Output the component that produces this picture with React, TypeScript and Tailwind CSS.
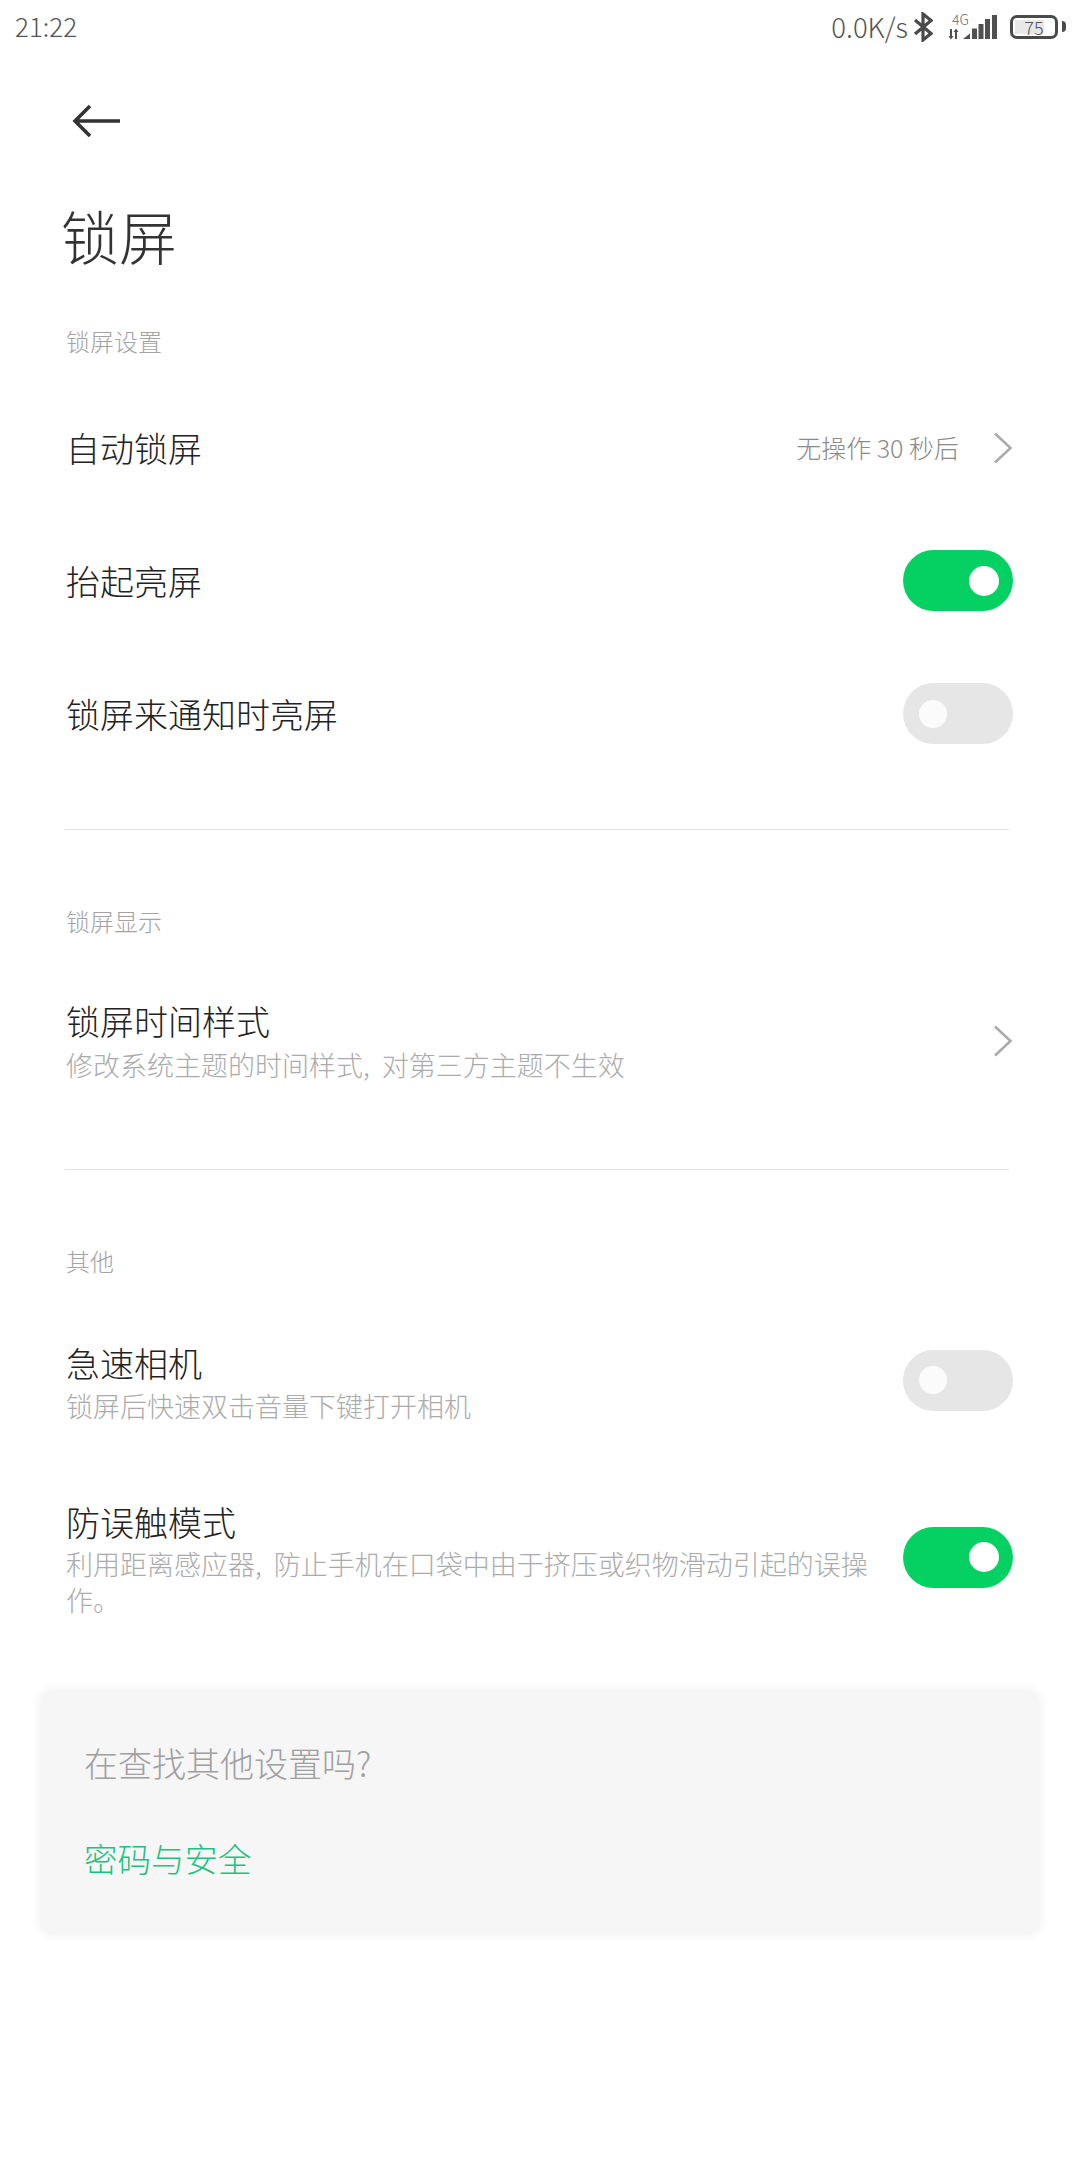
const font = "font-['Noto_Sans_CJK_SC','Noto_Sans',sans-serif]";

function SectionLabel({ children, className = "" }: { children: string; className?: string }) {
  return <div className={`flex h-10 items-center pb-[1px] pl-[66px] text-[24px] font-light text-[#a3a3a3] ${className}`}>{children}</div>;
}

function Toggle({ on, className = "" }: { on: boolean; className?: string }) {
  return (
    <div className={`flex h-[61px] w-[110px] shrink-0 items-center rounded-full ${on ? "justify-end bg-[#05d163] pr-[14px]" : "justify-start bg-[#e6e6e6] pl-[16px]"} ${className}`}>
      <div className={`rounded-full ${on ? "h-[30px] w-[30px] bg-white" : "h-7 w-7 bg-[#fbfbfb]"}`} />
    </div>
  );
}

function Chevron() {
  return (
    <svg width="20" height="32" viewBox="0 0 20 32" fill="none" className="shrink-0">
      <path d="M2 1.5 L17.5 16 L2 30.5" stroke="#ababab" strokeWidth="2.6" />
    </svg>
  );
}

function Divider({ className = "" }: { className?: string }) {
  return <div className={`ml-[65px] h-px w-[944px] bg-[#e2e2e2] ${className}`} />;
}

function BluetoothIcon() {
  return (
    <svg width="20" height="30" viewBox="0 0 20 30" fill="none" className="shrink-0">
      <path d="M2 8 L18 21.5 L10 28 V2 L18 8.5 L2 22" stroke="#4a4a4a" strokeWidth="3.2" />
    </svg>
  );
}

function SignalIcon() {
  return (
    <div className="relative h-[28px] w-[50px]">
      <span className="absolute left-[4px] top-[-2px] text-[14px] leading-[16px] font-light text-[#666]">4G</span>
      <svg width="50" height="28" viewBox="0 0 50 28" className="absolute left-0 top-0" fill="#505050">
        <path d="M2 16 H4 V23 H5.5 L3 26.5 L0.5 23 H2 Z" />
        <path d="M7 26 H9 V19 H10.5 L8 15.5 L5.5 19 H7 Z" />
        <path d="M15 26 L22 20.5 V26 Z" />
        <rect x="24" y="15.5" width="5" height="10.5" />
        <rect x="30.5" y="11" width="5" height="15" />
        <rect x="37" y="6" width="5" height="20" />
        <rect x="44" y="2" width="5" height="24" />
      </svg>
    </div>
  );
}

function BatteryIcon() {
  return (
    <div className="flex items-center gap-[4px]">
      <div className="flex h-[24px] w-[48px] items-center rounded-[7px] border-[3px] border-[#4a4a4a] p-[2px]">
        <div className="relative flex h-full w-full items-center">
          <div className="h-full w-[75%] bg-[#e8e8e8]" />
          <span className="absolute inset-0 flex items-center justify-center text-[18px] leading-none font-light text-[#555]">75</span>
        </div>
      </div>
      <div className="h-[11px] w-[4px] rounded-r-sm bg-[#4a4a4a]" />
    </div>
  );
}

export default function App() {
  return (
    <div className={`h-[2160px] w-[1080px] overflow-hidden bg-white ${font}`}>
      <div className="flex h-[56px] items-center justify-between pl-[15px] pr-[14px]">
        <span className="pb-[5px] text-[26px] font-light text-[#555]">21:22</span>
        <div className="flex items-center pb-[3px]">
          <span className="text-[27.5px] font-light text-[#555]">0.0K/s</span>
          <div className="ml-[5px]"><BluetoothIcon /></div>
          <div className="ml-[15px]"><SignalIcon /></div>
          <div className="ml-[12px]"><BatteryIcon /></div>
        </div>
      </div>

      <div className="flex h-[130px] items-center pl-[72px]">
        <svg width="50" height="34" viewBox="0 0 50 34" fill="none">
          <path d="M48 17 H3 M18 2 L3 17 L18 32" stroke="#333" strokeWidth="3.6" />
        </svg>
      </div>

      <div className="flex h-[100px] items-center pb-[2px] pl-[61px] text-[58px] font-light text-[#333]">锁屏</div>

      <SectionLabel className="mt-[35px]">锁屏设置</SectionLabel>

      <div className="mt-5">
        <div className="flex h-[133px] items-center justify-between pl-[66px] pr-[67px]">
          <span className="text-[34px] text-[#222] font-light">自动锁屏</span>
          <div className="flex items-center gap-[34px]">
            <span className="text-[25px] font-light text-[#8a8a8a]">无操作 30 秒后</span>
            <Chevron />
          </div>
        </div>
        <div className="flex h-[133px] items-center justify-between pl-[66px] pr-[67px]">
          <span className="text-[34px] text-[#222] font-light">抬起亮屏</span>
          <Toggle on />
        </div>
        <div className="flex h-[133px] items-center justify-between pl-[66px] pr-[67px]">
          <span className="text-[34px] text-[#222] font-light">锁屏来通知时亮屏</span>
          <Toggle on={false} />
        </div>
      </div>

      <Divider className="mt-[49px]" />
      <SectionLabel className="mt-[71px]">锁屏显示</SectionLabel>

      <div className="mt-[33px] flex h-[133px] items-center justify-between pl-[66px] pr-[67px]">
        <div>
          <div className="text-[34px] leading-[44px] text-[#222] font-light">锁屏时间样式</div>
          <div className="mt-1 text-[27px] leading-[36px] font-light text-[#ababab] [word-spacing:6px]">修改系统主题的时间样式, 对第三方主题不生效</div>
        </div>
        <Chevron />
      </div>

      <Divider className="mt-[62px]" />
      <SectionLabel className="mt-[71px]">其他</SectionLabel>

      <div className="mt-[33px] flex h-[132px] items-center justify-between pl-[66px] pr-[67px]">
        <div className="pt-1">
          <div className="text-[34px] leading-[44px] text-[#222] font-light">急速相机</div>
          <div className="mt-[3px] text-[27px] leading-[36px] font-light text-[#ababab]">锁屏后快速双击音量下键打开相机</div>
        </div>
        <Toggle on={false} />
      </div>

      <div className="mt-[54px] flex items-center justify-between pl-[66px] pr-[67px]">
        <div className="w-[815px]">
          <div className="text-[34px] leading-[44px] text-[#222] font-light">防误触模式</div>
          <div className="mt-[2px] text-[27px] leading-[36px] font-light text-[#ababab] [word-spacing:6px]">利用距离感应器, 防止手机在口袋中由于挤压或织物滑动引起的误操作。</div>
        </div>
        <Toggle on className="mb-1" />
      </div>

      <div className="mx-[40px] mt-[72px] flex h-[245px] flex-col rounded-[14px] bg-[#f6f6f6] pl-[44px] pt-[50px] shadow-[0_0_8px_3px_#f6f6f6]">
        <div className="text-[34px] leading-[46px] font-light text-[#a0a0a0]">在查找其他设置吗?</div>
        <div className="mt-[49px] text-[33.5px] leading-[46px] font-light text-[#1cc27f]">密码与安全</div>
      </div>
    </div>
  );
}
